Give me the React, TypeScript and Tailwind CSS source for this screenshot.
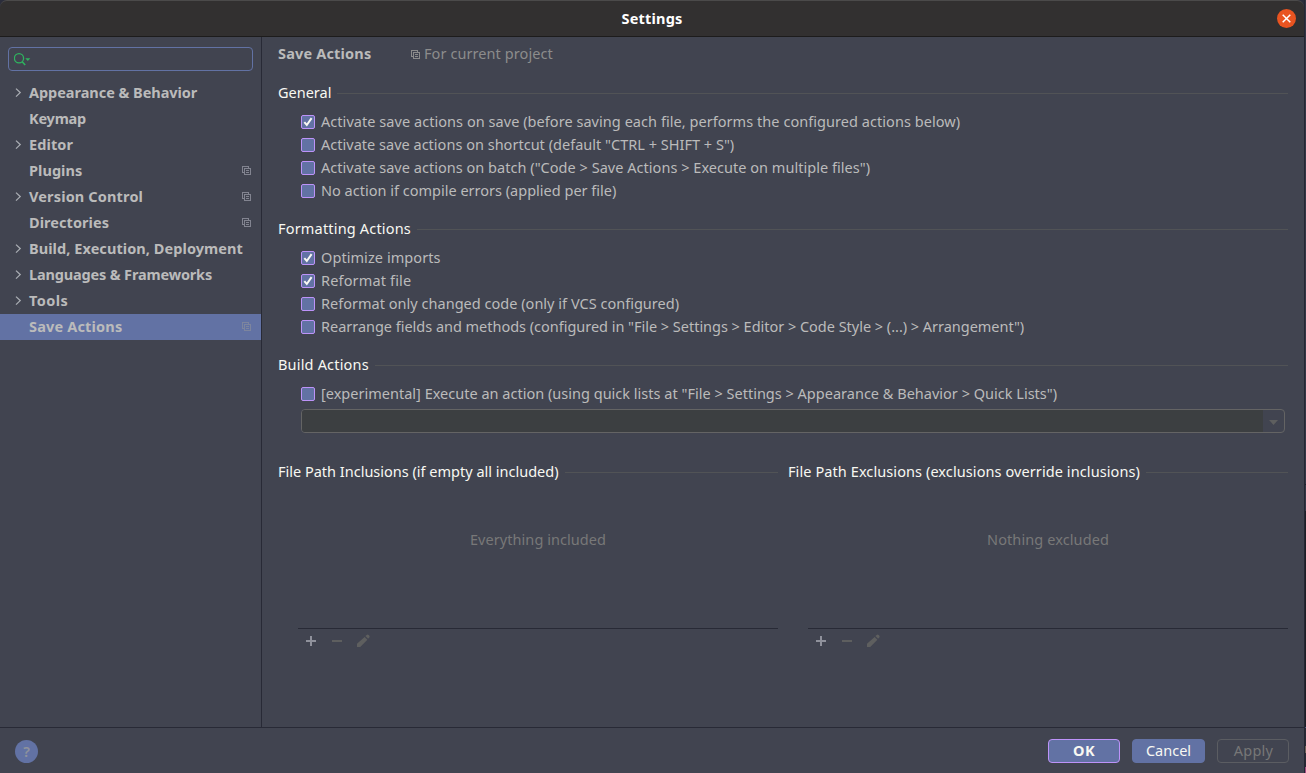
import type { ReactNode } from 'react';

function ProjectIcon({ className = '' }: { className?: string }) {
  return (
    <svg className={className} width="10" height="10" viewBox="0 0 10 10" fill="none" stroke="currentColor" shapeRendering="crispEdges">
      <path d="M2 6.5H.5V.5H6.5V2M2.5 2.5H8.5V8.5H2.5ZM4 4.5H7M4 6.5H7" />
    </svg>
  );
}

function Chevron() {
  return (
    <svg width="7" height="10" viewBox="0 0 7 10" fill="none" stroke="#a9adb3" strokeWidth="1.3">
      <path d="M1 .6L5.2 4.6L1 8.6" />
    </svg>
  );
}

type NavItem = { label: string; tracking: string; expandable?: boolean; project?: boolean; selected?: boolean };

const navItems: NavItem[] = [
  { label: 'Appearance & Behavior', tracking: 'tracking-[-0.04px]', expandable: true },
  { label: 'Keymap', tracking: 'tracking-[-0.2px]' },
  { label: 'Editor', tracking: 'tracking-[0.1px]', expandable: true },
  { label: 'Plugins', tracking: 'tracking-[0.05px]', project: true },
  { label: 'Version Control', tracking: 'tracking-[0.15px]', expandable: true, project: true },
  { label: 'Directories', tracking: 'tracking-[0.06px]', project: true },
  { label: 'Build, Execution, Deployment', tracking: 'tracking-[0.07px]', expandable: true },
  { label: 'Languages & Frameworks', tracking: 'tracking-[-0.16px]', expandable: true },
  { label: 'Tools', tracking: 'tracking-[0.4px]', expandable: true },
  { label: 'Save Actions', tracking: 'tracking-[0.17px]', project: true, selected: true },
];

type Option = { label: string; tracking: string; checked?: boolean };

const generalOptions: Option[] = [
  { label: 'Activate save actions on save (before saving each file, performs the configured actions below)', tracking: 'tracking-[0.05px]', checked: true },
  { label: 'Activate save actions on shortcut (default "CTRL + SHIFT + S")', tracking: 'tracking-[0.015px]' },
  { label: 'Activate save actions on batch ("Code > Save Actions > Execute on multiple files")', tracking: 'tracking-[0.032px]' },
  { label: 'No action if compile errors (applied per file)', tracking: 'tracking-[0.005px]' },
];

const formattingOptions: Option[] = [
  { label: 'Optimize imports', tracking: 'tracking-[0.07px]', checked: true },
  { label: 'Reformat file', tracking: 'tracking-[0.15px]', checked: true },
  { label: 'Reformat only changed code (only if VCS configured)', tracking: 'tracking-[0.02px]' },
  { label: 'Rearrange fields and methods (configured in "File > Settings > Editor > Code Style > (...) > Arrangement")', tracking: 'tracking-[-0.022px]' },
];

const buildOptions: Option[] = [
  { label: '[experimental] Execute an action (using quick lists at "File > Settings > Appearance & Behavior > Quick Lists")', tracking: 'tracking-[0.01px]' },
];

function OptionRow({ label, tracking, checked }: Option) {
  return (
    <label className="flex h-[23px] items-start gap-[6px] pl-[23px]">
      <span className="mt-[5px] flex size-[14px] shrink-0 items-center justify-center rounded-[2px] border border-[#bd93f9] bg-[#6272a4]">
        {checked && (
          <svg width="12" height="12" viewBox="0 0 12 12" fill="none" stroke="#f8f8f2" strokeWidth="2">
            <path d="M2.3 6.2L4.8 9L9.6 2.2" />
          </svg>
        )}
      </span>
      <span className={`whitespace-nowrap leading-[23px] text-[#bbbbbb] ${tracking}`}>{label}</span>
    </label>
  );
}

function SectionTitle({ children, tracking }: { children: ReactNode; tracking: string }) {
  return (
    <div className="flex h-[24px] items-center gap-[6px]">
      <h2 className={`whitespace-nowrap pb-[2px] text-[#f8f8f2] ${tracking}`}>{children}</h2>
      <div className="mt-px h-px flex-1 bg-[#515356]" />
    </div>
  );
}

function PathPanel({ title, tracking, empty, emptyTracking }: { title: string; tracking: string; empty: string; emptyTracking: string }) {
  return (
    <section className="flex flex-col">
      <SectionTitle tracking={tracking}>{title}</SectionTitle>
      <div className="ml-5 flex h-[145px] justify-center border-b border-[#282a36] pt-[44px]">
        <span className={`leading-[22px] text-[#787878] ${emptyTracking}`}>{empty}</span>
      </div>
      <div className="ml-5 flex h-[24px] items-center gap-[10px] pl-[5px]">
        <svg width="16" height="16" viewBox="0 0 16 16" fill="#8f919b" shapeRendering="crispEdges">
          <path d="M7 3h2v4h4v2H9v4H7V9H3V7h4Z" />
        </svg>
        <svg width="16" height="16" viewBox="0 0 16 16" fill="#5e5f5f" shapeRendering="crispEdges">
          <path d="M3 7h10v2H3Z" />
        </svg>
        <svg width="16" height="16" viewBox="0 0 16 16" fill="#5e5f5f">
          <path d="M2 14v-3.2L9.6 3.9l2.8 2.8L5.2 14ZM10.4 3.1l1.3-1.2q1-.8 2 .1l.5.5q.9 1 .1 2l-1.2 1.3Z" />
        </svg>
      </div>
    </section>
  );
}

export default function App() {
  return (
    <div className="flex h-[773px] w-[1306px] overflow-hidden bg-[#2b2d3b] font-['Noto_Sans',sans-serif] text-[14.5px] leading-[22px]">
      <div className="flex w-[1304px] flex-col">
        <header className="grid h-[37px] shrink-0 grid-cols-[1fr_auto_1fr] items-center rounded-t-[7px] border-b border-t border-b-[#1d1c1c] border-t-[#4b4a4a] bg-[#323030]">
          <span />
          <h1 className="pb-px font-bold tracking-[0.2px] text-white">Settings</h1>
          <button className="mb-px mr-[8px] flex size-[19px] items-center justify-center justify-self-end rounded-full bg-[#e95420]" aria-label="Close">
            <svg width="9" height="9" viewBox="0 0 9 9" stroke="white" strokeWidth="1.5">
              <path d="M.7.7L8.3 8.3M8.3.7L.7 8.3" />
            </svg>
          </button>
        </header>

        <div className="flex min-h-0 flex-1 bg-[#414450]">
          <aside className="flex w-[262px] shrink-0 flex-col border-r border-[#282a36] pt-[10px]">
            <div className="mx-2 mb-[9px] flex h-[24px] items-center rounded-[4px] border border-[#6272a4] pl-[5px]">
              <svg width="17" height="13" viewBox="0 0 17 13" fill="none" stroke="#2fb45f" strokeWidth="1.3">
                <circle cx="5" cy="5.3" r="4.6" />
                <path d="M8.2 8.8L11.2 12" strokeWidth="1.6" />
                <path d="M11.3 5.2H16.3L13.8 8Z" fill="#2fb45f" stroke="none" />
              </svg>
            </div>
            <nav>
              {navItems.map((item) => (
                <div
                  key={item.label}
                  className={`flex h-[26px] items-center pr-[9px] ${item.selected ? 'bg-[#6272a4] text-[#7d859e]' : 'text-[#828490]'}`}
                >
                  <span className="flex w-[29px] justify-start pl-[15px]">{item.expandable && <Chevron />}</span>
                  <span className={`flex-1 whitespace-nowrap pb-[2px] font-bold text-[#bbbbbb] ${item.tracking}`}>{item.label}</span>
                  {item.project && <ProjectIcon />}
                </div>
              ))}
            </nav>
          </aside>

          <main className="flex min-w-0 flex-1 flex-col pl-4 pr-4 pt-[5px]">
            <div className="flex h-[24px] items-center">
              <span className="w-[133px] pb-[2px] font-bold tracking-[0.17px] text-[#bbbbbb]">Save Actions</span>
              <ProjectIcon className="mt-px text-[#8c8c8c]" />
              <span className="ml-[3px] pb-[2px] tracking-[0.08px] text-[#8c8c8c]">For current project</span>
            </div>

            <section className="mt-[15px]">
              <SectionTitle tracking="tracking-[0px]">General</SectionTitle>
              <div className="pt-[5px]">{generalOptions.map((o) => <OptionRow key={o.label} {...o} />)}</div>
            </section>

            <section className="mt-[15px]">
              <SectionTitle tracking="tracking-[0.18px]">Formatting Actions</SectionTitle>
              <div className="pt-[5px]">{formattingOptions.map((o) => <OptionRow key={o.label} {...o} />)}</div>
            </section>

            <section className="mt-[15px]">
              <SectionTitle tracking="tracking-[0.18px]">Build Actions</SectionTitle>
              <div className="pt-[5px]">{buildOptions.map((o) => <OptionRow key={o.label} {...o} />)}</div>
              <div className="ml-[23px] mr-[3px] mt-[4px] flex h-[24px] overflow-hidden rounded-[4px] border border-[#646464]">
                <div className="flex-1 bg-[#3c3f41]" />
                <div className="flex w-[21px] items-center justify-center">
                  <svg width="9" height="5" viewBox="0 0 9 5" fill="#5e5f5f" className="mr-px mt-[2px]">
                    <path d="M0 0H9L4.5 5Z" />
                  </svg>
                </div>
              </div>
            </section>

            <div className="mt-[27px] grid grid-cols-2 gap-[10px]">
              <PathPanel title="File Path Inclusions (if empty all included)" tracking="tracking-[0px]" empty="Everything included" emptyTracking="tracking-[0.06px]" />
              <PathPanel title="File Path Exclusions (exclusions override inclusions)" tracking="tracking-[0.09px]" empty="Nothing excluded" emptyTracking="tracking-[0.1px]" />
            </div>
          </main>
        </div>

        <footer className="flex h-[46px] shrink-0 items-center border-t border-[#282a36] bg-[#414450] pl-[15px] pr-[15px]">
          <button className="mt-[2px] flex size-[23px] items-center justify-center rounded-full bg-[#6272a4] font-semibold leading-[21px] text-[#8f929c]" aria-label="Help">?</button>
          <div className="ml-auto mt-px flex">
            <button className="flex h-[24px] w-[72px] justify-center rounded-[4px] border border-[#bd93f9] bg-[#6272a4] font-bold leading-[21px] tracking-[0.5px] text-[#f8f8f2]">OK</button>
            <button className="ml-[12px] flex h-[24px] w-[73px] justify-center rounded-[4px] border border-[#6272a4] bg-[#6272a4] leading-[21px] text-[#f8f8f2]">Cancel</button>
            <button className="ml-[12px] flex h-[24px] w-[72px] justify-center rounded-[4px] border border-[#5b5d62] pl-px leading-[21px] tracking-[0.25px] text-[#777777]">Apply</button>
          </div>
        </footer>
      </div>
      <div className="flex w-[2px] flex-col border-l border-[#252733]">
        <div className="h-[484px] bg-[#343746]" />
        <div className="h-[27px] border-t border-[#20222c] bg-[#343746]" />
        <div className="h-[216px] bg-[#1c1e26]" />
        <div className="h-[19px] border-t border-[#4b5680] bg-[#282a36]" />
        <div className="h-[7px] bg-[#6f6258]" />
        <div className="h-[14px] bg-[#282a36]" />
        <div className="h-[6px] bg-[#a24b83]" />
      </div>
    </div>
  );
}
